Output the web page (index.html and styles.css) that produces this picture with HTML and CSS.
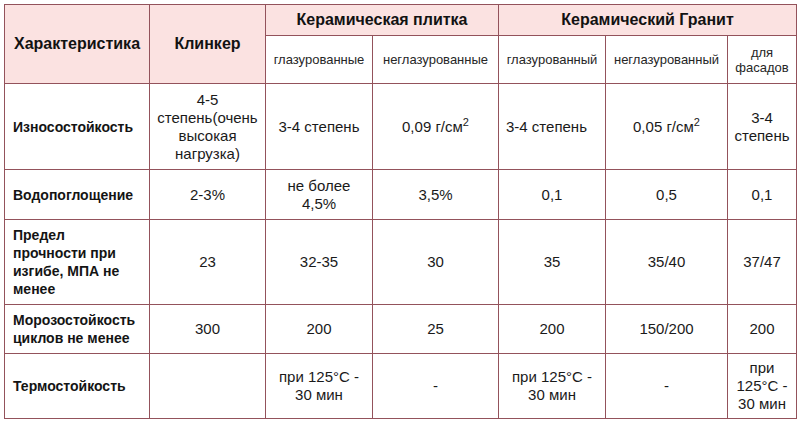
FILE: index.html
```html
<!DOCTYPE html>
<html lang="ru">
<head>
<meta charset="utf-8">
<link rel="stylesheet" href="styles.css">
</head>
<body>
<div class="wrap">
<table class="tbl">
  <colgroup>
    <col class="c1"><col class="c2"><col class="c3"><col class="c4"><col class="c5"><col class="c6"><col class="c7">
  </colgroup>
  <thead>
    <tr class="h1">
      <th rowspan="2" class="pink big">Характеристика</th>
      <th rowspan="2" class="pink big">Клинкер</th>
      <th colspan="2" class="pink big">Керамическая плитка</th>
      <th colspan="3" class="pink big">Керамический Гранит</th>
    </tr>
    <tr class="h2">
      <th class="sub">глазурованные</th>
      <th class="sub">неглазурованные</th>
      <th class="sub">глазурованный</th>
      <th class="sub">неглазурованный</th>
      <th class="sub">для<br>фасадов</th>
    </tr>
  </thead>
  <tbody>
    <tr class="r1">
      <td class="name">Износостойкость</td>
      <td>4-5<br>степень(очень<br>высокая<br>нагрузка)</td>
      <td>3-4 степень</td>
      <td>0,09 г/см<sup>2</sup></td>
      <td class="left">3-4 степень</td>
      <td>0,05 г/см<sup>2</sup></td>
      <td>3-4<br>степень</td>
    </tr>
    <tr class="r2">
      <td class="name">Водопоглощение</td>
      <td>2-3%</td>
      <td>не более<br>4,5%</td>
      <td>3,5%</td>
      <td>0,1</td>
      <td>0,5</td>
      <td>0,1</td>
    </tr>
    <tr class="r3">
      <td class="name">Предел<br>прочности при<br>изгибе, МПА не<br>менее</td>
      <td>23</td>
      <td>32-35</td>
      <td>30</td>
      <td>35</td>
      <td>35/40</td>
      <td>37/47</td>
    </tr>
    <tr class="r4">
      <td class="name">Морозостойкость<br>циклов не менее</td>
      <td>300</td>
      <td>200</td>
      <td>25</td>
      <td>200</td>
      <td>150/200</td>
      <td>200</td>
    </tr>
    <tr class="r5">
      <td class="name">Термостойкость</td>
      <td></td>
      <td>при 125°C -<br>30 мин</td>
      <td>-</td>
      <td>при 125°C -<br>30 мин</td>
      <td>-</td>
      <td>при<br>125°C -<br>30 мин</td>
    </tr>
  </tbody>
</table>
</div>
</body>
</html>
```
FILE: styles.css
```css
html, body {
  margin: 0;
  padding: 0;
  background: #ffffff;
}
.wrap {
  padding: 4px 0 0 4px;
}
.tbl {
  border-collapse: collapse;
  table-layout: fixed;
  width: 792px;
  font-family: "Liberation Sans", Arial, sans-serif;
  font-size: 15px;
  line-height: 18px;
  color: #1a1a1a;
}
.c1 { width: 145px; }
.c2 { width: 116px; }
.c3 { width: 107px; }
.c4 { width: 126px; }
.c5 { width: 107px; }
.c6 { width: 122px; }
.c7 { width: 69px; }
.tbl th, .tbl td {
  border: 1px solid #93525b;
  padding: 0 3px;
  text-align: center;
  vertical-align: middle;
}
.tbl th.pink {
  background: #fbe2e1;
}
.tbl th.big {
  font-size: 16px;
  font-weight: bold;
  color: #121212;
}
.tbl th.sub {
  font-size: 13px;
  font-weight: normal;
  line-height: 15px;
  color: #262626;
  background: #ffffff;
}
.tbl td.name {
  text-align: left;
  font-weight: bold;
  font-size: 14px;
  padding-left: 8px;
  color: #141414;
}
.tbl td.left {
  text-align: left;
  padding-left: 7px;
}
.tbl sup {
  font-size: 11px;
  line-height: 0;
  vertical-align: 6px;
}
.h1 { height: 31px; }
.h2 { height: 48px; }
.r1 { height: 86px; }
.r2 { height: 50px; }
.r3 { height: 85px; }
.r4 { height: 49px; }
.r5 { height: 65px; }
```
